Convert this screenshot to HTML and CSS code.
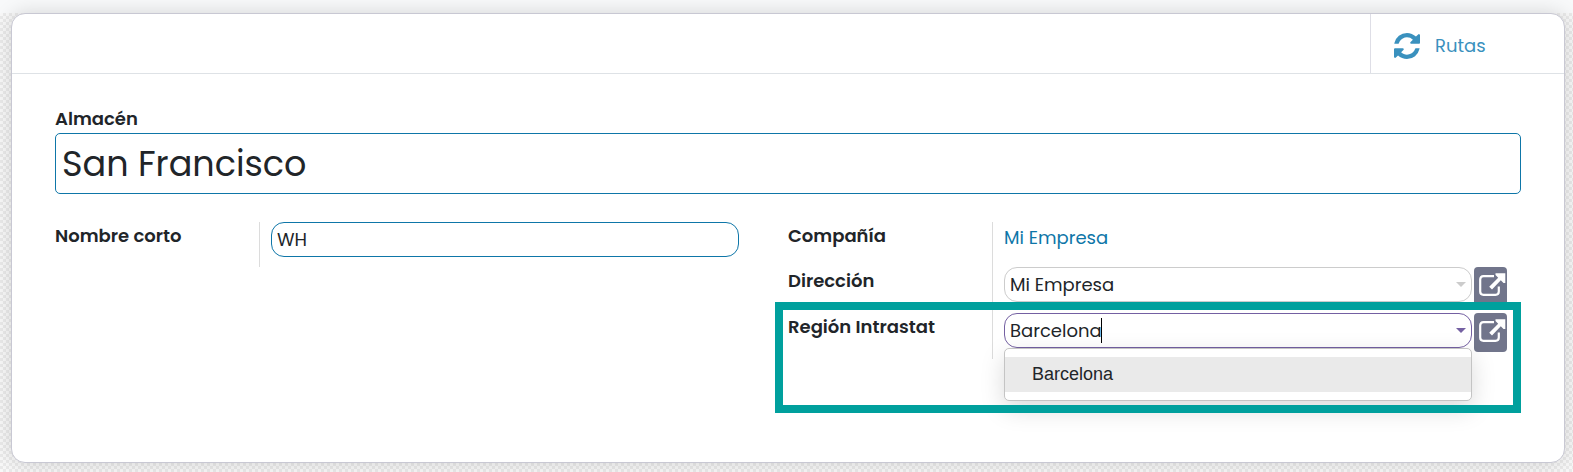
FILE: index.html
```html
<!DOCTYPE html>
<html lang="es">
<head>
<meta charset="utf-8">
<title>Almacén - San Francisco</title>
<link rel="stylesheet" href="styles.css">
</head>
<body>
<svg class="sprite" aria-hidden="true">
  <symbol id="external" viewBox="0 0 27 24">
    <path d="M15 3.200H4.500Q1.200 3.200 1.200 6.500V18.500Q1.200 21.800 4.500 21.800H16.500Q19.800 21.800 19.800 18.500V13.500" fill="none" stroke="currentColor" stroke-width="2.200"/>
    <path d="M16.500 0.300H26.300V10H24.500L21.800 7.300L13 16.500L10.200 13.700L19.200 4.700L16.500 2Z" fill="currentColor"/>
  </symbol>
</svg>
<div class="topbar"></div>
<main class="sheet">
  <header class="button-box">
    <button class="stat-button" type="button">
      <svg class="refresh" viewBox="0 0 1536 1536" aria-hidden="true"><path fill="currentColor" d="M1511 928q0 5-1 7-64 268-268 434.500T764 1536q-146 0-282.500-55T238 1324l-129 129q-19 19-45 19t-45-19-19-45V960q0-26 19-45t45-19h448q26 0 45 19t19 45-19 45l-137 137q71 66 161 102t187 36q134 0 250-65t186-179q11-17 53-117 8-23 30-23h192q13 0 22.500 9.500t9.500 22.500zm25-800v448q0 26-19 45t-45 19h-448q-26 0-45-19t-19-45 19-45l138-138Q969 256 768 256q-134 0-250 65T332 500q-11 17-53 117-8 23-30 23H50q-13 0-22.500-9.500T18 608v-7q65-268 270-434.500T768 0q146 0 284 55.500T1297 212l130-129q19-19 45-19t45 19 19 45z"/></svg>
      <span>Rutas</span>
    </button>
  </header>
  <form class="form" autocomplete="off">
    <label class="label" for="name">Almacén</label>
    <input class="name-input" id="name" type="text" value="San Francisco">
    <div class="groups">
      <div class="group">
        <div class="row">
          <label class="label" for="code">Nombre corto</label>
          <div class="value"><input class="field" id="code" type="text" value="WH"></div>
        </div>
      </div>
      <div class="group">
        <div class="row">
          <span class="label">Compañía</span>
          <div class="value"><a class="link" href="#company">Mi Empresa</a></div>
        </div>
        <div class="row">
          <label class="label" for="address">Dirección</label>
          <div class="value">
            <input class="field muted" id="address" type="text" role="combobox" aria-expanded="false" value="Mi Empresa">
            <span class="arrow muted"></span>
          </div>
          <button class="open" type="button" aria-label="Abrir dirección"><svg class="external"><use href="#external"/></svg></button>
        </div>
        <div class="row">
          <label class="label" for="region">Región Intrastat</label>
          <div class="value">
            <input class="field active" id="region" type="text" role="combobox" aria-expanded="true" aria-controls="regions" value="Barcelona">
            <span class="caret"></span>
            <span class="arrow"></span>
            <ul class="menu" id="regions" role="listbox">
              <li class="option" role="option" aria-selected="true">Barcelona</li>
            </ul>
          </div>
          <button class="open" type="button" aria-label="Abrir región"><svg class="external"><use href="#external"/></svg></button>
          <div class="highlight"></div>
        </div>
      </div>
    </div>
  </form>
</main>
</body>
</html>
```
FILE: styles.css
```css
* { box-sizing: border-box; }
body {
  margin: 0;
  min-height: 100vh;
  overflow: hidden;
  color: #212529;
  font: 18px/28px Poppins, Inter, sans-serif;
  background: repeating-conic-gradient(#eaeaea 0% 25%, #f8f8f8 0% 50%) 0 13px / 6px 6px;
}
input, button { font: inherit; color: inherit; }
.sprite { position: absolute; width: 0; height: 0; }
.topbar { height: 13px; background: #f8f9fa; }
.sheet {
  margin: 0 8px 9px 11px;
  min-height: 450px;
  background: #fff;
  border: 1px solid #c8c8d3;
  border-radius: 14px;
  box-shadow: 0 0 20px rgba(0, 0, 0, .15);
}
.button-box {
  display: flex;
  justify-content: flex-end;
  height: 60px;
  border-bottom: 1px solid #dee2e6;
}
.stat-button {
  display: flex;
  align-items: center;
  gap: 15px;
  width: 194px;
  padding: 4px 0 0 23px;
  color: #3a91be;
  background: none;
  border: 0;
  border-left: 1px solid #dedee6;
}
.refresh { width: 26px; height: 26px; }
.form { padding: 31px 43px 0; }
.label { font-weight: 600; }
.form > .label { display: block; }
.name-input {
  display: block;
  width: 100%;
  height: 61px;
  padding: 0 6px;
  font-size: 35px;
  background: #fff;
  border: 1px solid #0e76a8;
  border-radius: 5px;
}
.groups {
  display: grid;
  grid-template-columns: 1fr 1fr;
  align-items: start;
  margin-top: 28px;
}
.row {
  position: relative;
  display: grid;
  grid-template-columns: 204px 1fr 49px;
  align-items: start;
  min-height: 46px;
}
.row:first-child { min-height: 45px; }
.value {
  position: relative;
  align-self: stretch;
  padding-left: 11px;
  border-left: 1px solid #dcdcdc;
}
.link { display: block; padding-top: 2px; color: #0e76a8; text-decoration: none; }
.field {
  display: block;
  width: 100%;
  height: 35px;
  padding: 0 5px;
  background: #fff;
  border: 1px solid #0e76a8;
  border-radius: 13px;
  outline: 0;
}
.field.muted { border-color: #ccc; }
.field.active { border-color: #7460a2; }
.arrow {
  position: absolute;
  top: 15px;
  right: 6px;
  border: 5px solid transparent;
  border-top-color: #7460a2;
  border-bottom: 0;
}
.arrow.muted { border-top-color: #ccc; }
.caret {
  position: absolute;
  top: 5px;
  left: 108px;
  width: 1px;
  height: 25px;
  background: #000;
}
.menu {
  position: absolute;
  top: 35px;
  left: 11px;
  right: 0;
  margin: 0;
  padding: 8px 0;
  list-style: none;
  background: #fff;
  border: 1px solid #c4c4c4;
  border-radius: 5px;
  box-shadow: 0 8px 24px rgba(0, 0, 0, .15);
}
.option {
  padding: 3px 27px 4px;
  font-family: "Liberation Sans", Arial, sans-serif;
  background: #eaeaea;
}
.open {
  display: grid;
  place-items: center;
  width: 33px;
  height: 39px;
  margin-left: 2px;
  padding: 0 0 3px 4px;
  color: #fff;
  background: #71758b;
  border: 0;
  border-radius: 4px;
}
.external { width: 27px; height: 24px; }
.highlight {
  position: absolute;
  inset: -11px 0 -54px -13px;
  border: 8px solid #00a09d;
  pointer-events: none;
}
```
